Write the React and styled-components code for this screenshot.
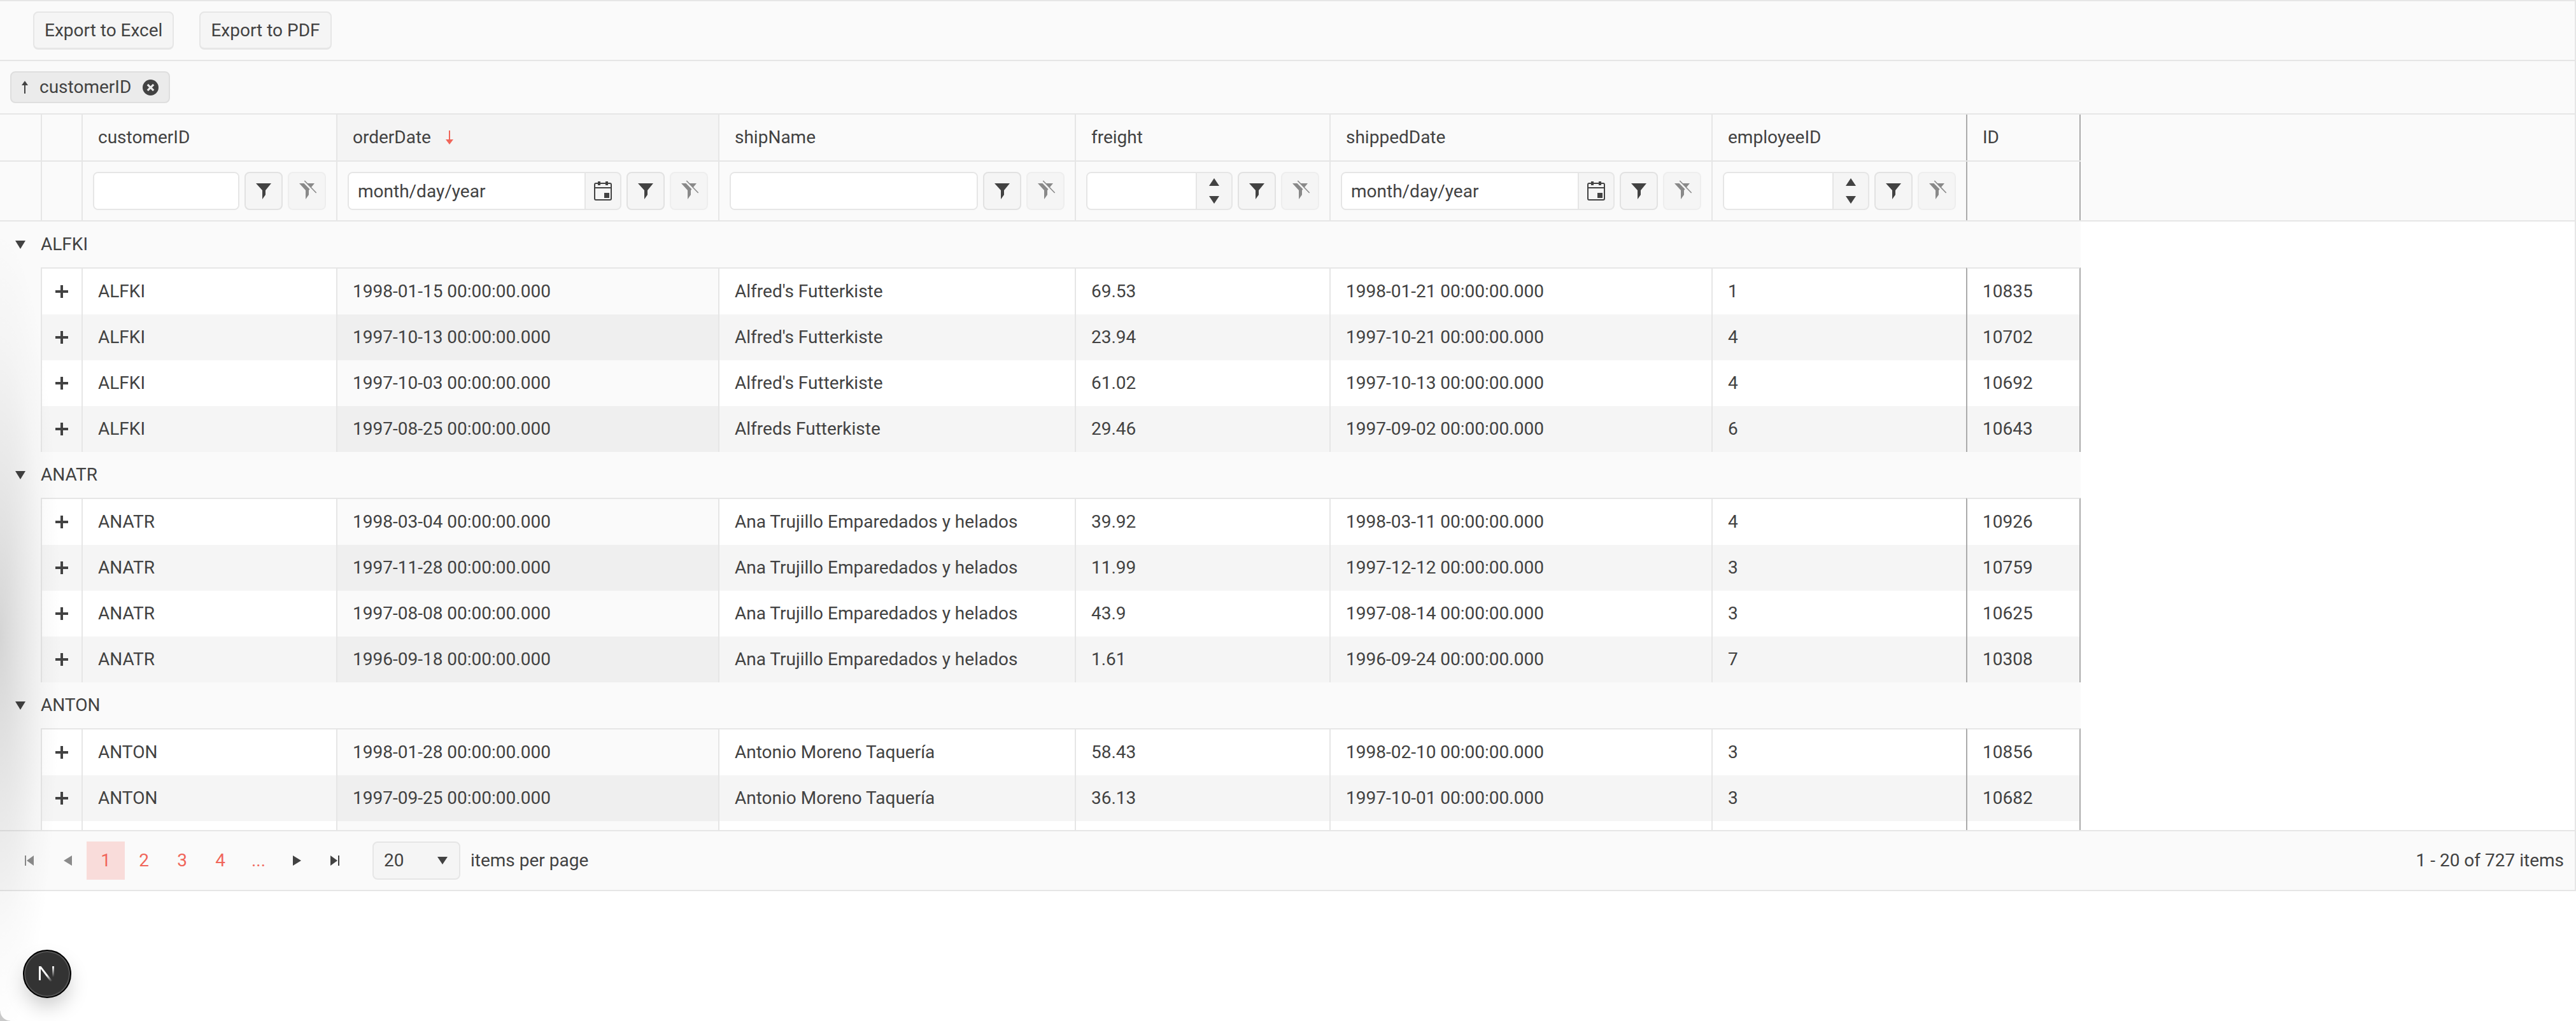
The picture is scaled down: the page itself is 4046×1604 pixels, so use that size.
import React from "react";
import styled, { createGlobalStyle } from "styled-components";

const GlobalStyle = createGlobalStyle`
  html, body { margin: 0; padding: 0; background: #fff; }
  * { box-sizing: border-box; }
`;

const COLS = "64px 64px 400px 600px 560px 400px 600px 400px 180px";
const LINE = "#e6e6e6";
const TEXT = "#424242";
const RED = "#f0665a";

const Page = styled.div`
  position: relative;
  width: 4046px;
  height: 1604px;
  overflow: hidden;
  background: #fff;
  font-family: Roboto, "Liberation Sans", sans-serif;
  font-size: 28px;
  line-height: 40px;
  color: ${TEXT};
`;

const Grid = styled.div`
  border-top: 2px solid ${LINE};
  border-bottom: 2px solid ${LINE};
  border-right: 2px solid ${LINE};
  height: 1400px;
  display: flex;
  flex-direction: column;
`;

const Toolbar = styled.div`
  height: 94px;
  flex: none;
  display: flex;
  gap: 40px;
  padding: 16px 52px;
  background: #fafafa;
  border-bottom: 2px solid ${LINE};
`;

const ToolButton = styled.button`
  height: 60px;
  padding: 0 16px;
  font: inherit;
  color: inherit;
  background: #f5f5f5;
  border: 2px solid ${LINE};
  border-bottom-width: 3px;
  border-radius: 8px;
`;

const GroupBar = styled.div`
  height: 84px;
  flex: none;
  padding: 16px;
  background: #fafafa;
  border-bottom: 2px solid ${LINE};
`;

const Chip = styled.div`
  width: 251px;
  height: 50px;
  display: flex;
  align-items: center;
  padding-left: 15px;
  background: #ebebeb;
  border: 2px solid #dedede;
  border-radius: 8px;
`;

const ChipLabel = styled.span`
  margin: 0 18px 0 17px;
`;

const Head = styled.div`
  flex: none;
  background: #fafafa;
  border-bottom: 2px solid ${LINE};
`;

const Row = styled.div`
  display: grid;
  grid-template-columns: ${COLS};
  width: 3268px;
`;

const HeadRow = styled(Row)`
  height: 74px;
  border-bottom: 2px solid ${LINE};
`;

const FilterRow = styled(Row)`
  height: 92px;
`;

const Cell = styled.div`
  display: flex;
  align-items: center;
  min-width: 0;
  white-space: nowrap;
  border-left: 2px solid ${(p) => (p.$locked ? "#ababab" : LINE)};
  border-right: ${(p) => (p.$last ? "2px solid #ababab" : "none")};
`;

const HeadCell = styled(Cell)`
  padding: 0 24px;
  background: ${(p) => (p.$sorted ? "#f4f4f4" : "transparent")};
`;

const BlankCell = styled.div``;

const FilterCell = styled(Cell)`
  padding: 0 16px;
  gap: 8px;
`;

const FieldBox = styled.div`
  flex: 1;
  min-width: 0;
  height: 60px;
  display: flex;
  background: #f5f5f5;
  border: 2px solid ${LINE};
  border-radius: 8px;
  overflow: hidden;
`;

const Field = styled.input`
  flex: 1;
  min-width: 0;
  height: 100%;
  padding: 0 14px;
  border: 0;
  outline: 0;
  font: inherit;
  color: inherit;
  background: #fff;
`;

const PickerSide = styled.div`
  flex: none;
  width: ${(p) => p.$w}px;
  display: flex;
  flex-direction: column;
  align-items: center;
  justify-content: ${(p) => (p.$spin ? "space-between" : "center")};
  padding: ${(p) => (p.$spin ? "8px 0" : "0")};
  border-left: 2px solid ${LINE};
`;

const FilterButton = styled.button`
  flex: none;
  width: 60px;
  height: 60px;
  padding: 0;
  display: flex;
  align-items: center;
  justify-content: center;
  background: #f5f5f5;
  border: 2px solid ${(p) => (p.$muted ? "#eeeeee" : "#e2e2e2")};
  border-radius: 8px;
`;

const Body = styled.div`
  flex: 1;
  min-height: 0;
  overflow: hidden;
`;

const GroupRow = styled.div`
  width: 3268px;
  height: 72px;
  display: flex;
  align-items: center;
  gap: 24px;
  padding-left: 24px;
  background: #fafafa;
`;

const DataRow = styled(Row)`
  height: ${(p) => (p.$first ? 74 : 72)}px;
  background: ${(p) => (p.$even ? "#f5f5f5" : "#fff")};
`;

const IndentCell = styled.div`
  background: #fafafa;
`;

const DataCell = styled(Cell)`
  padding: 0 24px;
  border-top: ${(p) => (p.$first ? `2px solid ${LINE}` : "none")};
  background: ${(p) => (p.$sorted ? (p.$even ? "#efefef" : "#fafafa") : "transparent")};
`;

const ExpandCell = styled(DataCell)`
  padding: 0;
  justify-content: center;
`;

const Pager = styled.div`
  flex: none;
  height: 94px;
  display: flex;
  align-items: center;
  padding: 0 17px 0 16px;
  background: #fafafa;
  border-top: 2px solid ${LINE};
`;

const PageButton = styled.div`
  width: 60px;
  height: 60px;
  display: flex;
  align-items: center;
  justify-content: center;
  color: ${RED};
  background: ${(p) => (p.$active ? "#f9dcda" : "transparent")};
  opacity: ${(p) => (p.$disabled ? 0.6 : 1)};
`;

const SizeSelect = styled.div`
  width: 138px;
  height: 60px;
  margin: 0 16px 0 29px;
  padding: 0 18px 0 16px;
  display: flex;
  align-items: center;
  justify-content: space-between;
  background: #f5f5f5;
  border: 2px solid ${LINE};
  border-radius: 8px;
`;

const PagerInfo = styled.div`
  margin-left: auto;
`;

const EdgeShade = styled.div`
  position: absolute;
  inset: 0;
  pointer-events: none;
  background: radial-gradient(
    ellipse 96px 640px at 0 1000px,
    rgba(0, 0, 0, 0.15) 0,
    rgba(0, 0, 0, 0.08) 38%,
    rgba(0, 0, 0, 0.025) 72%,
    transparent 100%
  );
`;

const CornerNotch = styled.div`
  position: absolute;
  left: 0;
  bottom: 0;
  width: 16px;
  height: 16px;
  background: radial-gradient(circle 16px at 100% 0, transparent 15px, #c9c9c9 16px);
`;

const DevBadge = styled.div`
  position: absolute;
  left: 36px;
  top: 1492px;
  width: 76px;
  height: 76px;
  padding-top: 4px;
  display: flex;
  align-items: center;
  justify-content: center;
  background: #333;
  border: 2px solid #000;
  border-radius: 50%;
  box-shadow: inset 0 0 0 2px rgba(255, 255, 255, 0.16), 0 16px 32px -4px rgba(0, 0, 0, 0.22);
`;

const MutedSvg = styled.svg`
  overflow: visible;
  opacity: 0.6;
`;

const SortSvg = styled.svg`
  margin-left: 22px;
`;

const Tri = ({ dir = "down", w = 16, h = 12, color = TEXT }) => {
  const pts = {
    down: `0,0 ${w},0 ${w / 2},${h}`,
    up: `0,${h} ${w},${h} ${w / 2},0`,
    left: `${w},0 ${w},${h} 0,${h / 2}`,
    right: `0,0 ${w},${h / 2} 0,${h}`,
  };
  return (
    <svg width={w} height={h} viewBox={`0 0 ${w} ${h}`}>
      <polygon points={pts[dir]} fill={color} />
    </svg>
  );
};

const FUNNEL = "M0 0H24L15 11V18L10 25V11Z";

const FilterIcon = () => (
  <svg width="24" height="25" viewBox="0 0 24 25">
    <path d={FUNNEL} fill={TEXT} />
  </svg>
);

const FilterClearIcon = () => (
  <MutedSvg width="24" height="25" viewBox="0 0 24 25">
    <path d={FUNNEL} fill={TEXT} />
    <path d="M6 -4L26 16.500" stroke="#f5f5f5" strokeWidth="3.400" />
    <path d="M8.300 -4L26.700 15" stroke={TEXT} strokeWidth="1.600" />
  </MutedSvg>
);

const CalendarIcon = () => (
  <svg width="28" height="30" viewBox="0 0 28 30">
    <rect x="1" y="3" width="26" height="26" rx="2" fill="none" stroke={TEXT} strokeWidth="2" />
    <path d="M1 10H27" stroke={TEXT} strokeWidth="2" />
    <rect x="6" y="0" width="4" height="6" fill={TEXT} />
    <rect x="18" y="0" width="4" height="6" fill={TEXT} />
    <rect x="16" y="18" width="8" height="8" fill={TEXT} />
  </svg>
);

const PlusIcon = () => (
  <svg width="20" height="20" viewBox="0 0 20 20">
    <path d="M0 10H20M10 0V20" stroke={TEXT} strokeWidth="4" />
  </svg>
);

const ArrowUp = () => (
  <svg width="12" height="20" viewBox="0 0 12 20">
    <path d="M6 20V3" stroke={TEXT} strokeWidth="2" />
    <polygon points="6,0 11,7 1,7" fill={TEXT} />
  </svg>
);

const SortDown = () => (
  <SortSvg width="14" height="22" viewBox="0 0 14 22">
    <path d="M7 0V16" stroke={RED} strokeWidth="2" />
    <polygon points="7,22 1,14 13,14" fill={RED} />
  </SortSvg>
);

const ChipClose = () => (
  <svg width="25" height="25" viewBox="0 0 24 24">
    <circle cx="12" cy="12" r="12" fill={TEXT} />
    <path d="M7.500 7.500L16.500 16.500M16.500 7.500L7.500 16.500" stroke="#ebebeb" strokeWidth="3" />
  </svg>
);

const EdgeNav = ({ dir }) => (
  <svg width="14" height="16" viewBox="0 0 14 16">
    {dir === "left" ? (
      <>
        <rect x="0" y="0" width="2" height="16" fill={TEXT} />
        <polygon points="14,0 14,16 3,8" fill={TEXT} />
      </>
    ) : (
      <>
        <rect x="12" y="0" width="2" height="16" fill={TEXT} />
        <polygon points="0,0 0,16 11,8" fill={TEXT} />
      </>
    )}
  </svg>
);

const NextMark = () => (
  <svg width="26" height="28" viewBox="0 0 26 28">
    <defs>
      <linearGradient id="nFade" x1="0" y1="0" x2="0.5" y2="1">
        <stop offset="0.6" stopColor="#fff" />
        <stop offset="1" stopColor="#fff" stopOpacity="0" />
      </linearGradient>
      <linearGradient id="nStem" x1="0" y1="0" x2="0" y2="1">
        <stop offset="0" stopColor="#fff" />
        <stop offset="0.85" stopColor="#fff" stopOpacity="0" />
      </linearGradient>
    </defs>
    <rect x="0" y="0" width="3" height="22" fill="#fff" />
    <polygon points="0,0 3.500,0 25,28 21,28" fill="url(#nFade)" />
    <rect x="21" y="0" width="3" height="20" fill="url(#nStem)" />
  </svg>
);

const Filter = ({ kind }) => (
  <>
    <FieldBox>
      <Field readOnly defaultValue={kind === "date" ? "month/day/year" : ""} />
      {kind === "date" && (
        <PickerSide $w={56}>
          <CalendarIcon />
        </PickerSide>
      )}
      {kind === "number" && (
        <PickerSide $w={56} $spin>
          <Tri dir="up" />
          <Tri dir="down" />
        </PickerSide>
      )}
    </FieldBox>
    <FilterButton>
      <FilterIcon />
    </FilterButton>
    <FilterButton $muted>
      <FilterClearIcon />
    </FilterButton>
  </>
);

const groups = [
  {
    name: "ALFKI",
    rows: [
      ["1998-01-15", "Alfred's Futterkiste", "69.53", "1998-01-21", "1", "10835"],
      ["1997-10-13", "Alfred's Futterkiste", "23.94", "1997-10-21", "4", "10702"],
      ["1997-10-03", "Alfred's Futterkiste", "61.02", "1997-10-13", "4", "10692"],
      ["1997-08-25", "Alfreds Futterkiste", "29.46", "1997-09-02", "6", "10643"],
    ],
  },
  {
    name: "ANATR",
    rows: [
      ["1998-03-04", "Ana Trujillo Emparedados y helados", "39.92", "1998-03-11", "4", "10926"],
      ["1997-11-28", "Ana Trujillo Emparedados y helados", "11.99", "1997-12-12", "3", "10759"],
      ["1997-08-08", "Ana Trujillo Emparedados y helados", "43.9", "1997-08-14", "3", "10625"],
      ["1996-09-18", "Ana Trujillo Emparedados y helados", "1.61", "1996-09-24", "7", "10308"],
    ],
  },
  {
    name: "ANTON",
    rows: [
      ["1998-01-28", "Antonio Moreno Taquería", "58.43", "1998-02-10", "3", "10856"],
      ["1997-09-25", "Antonio Moreno Taquería", "36.13", "1997-10-01", "3", "10682"],
    ],
  },
];

const stamp = (d) => `${d} 00:00:00.000`;

export default function App() {
  return (
    <Page>
      <GlobalStyle />
      <Grid>
        <Toolbar>
          <ToolButton>Export to Excel</ToolButton>
          <ToolButton>Export to PDF</ToolButton>
        </Toolbar>
        <GroupBar>
          <Chip>
            <ArrowUp />
            <ChipLabel>customerID</ChipLabel>
            <ChipClose />
          </Chip>
        </GroupBar>
        <Head>
          <HeadRow>
            <BlankCell />
            <Cell />
            <HeadCell>customerID</HeadCell>
            <HeadCell $sorted>
              orderDate
              <SortDown />
            </HeadCell>
            <HeadCell>shipName</HeadCell>
            <HeadCell>freight</HeadCell>
            <HeadCell>shippedDate</HeadCell>
            <HeadCell>employeeID</HeadCell>
            <HeadCell $locked $last>ID</HeadCell>
          </HeadRow>
          <FilterRow>
            <BlankCell />
            <Cell />
            <FilterCell><Filter kind="text" /></FilterCell>
            <FilterCell><Filter kind="date" /></FilterCell>
            <FilterCell><Filter kind="text" /></FilterCell>
            <FilterCell><Filter kind="number" /></FilterCell>
            <FilterCell><Filter kind="date" /></FilterCell>
            <FilterCell><Filter kind="number" /></FilterCell>
            <Cell $locked $last />
          </FilterRow>
        </Head>
        <Body>
          {groups.map((g) => (
            <React.Fragment key={g.name}>
              <GroupRow>
                <Tri w={16} h={13} />
                {g.name}
              </GroupRow>
              {g.rows.map((r, i) => {
                const first = i === 0;
                const even = i % 2 === 1;
                return (
                  <DataRow key={r[5]} $first={first} $even={even}>
                    <IndentCell />
                    <ExpandCell $first={first}><PlusIcon /></ExpandCell>
                    <DataCell $first={first}>{g.name}</DataCell>
                    <DataCell $first={first} $even={even} $sorted>{stamp(r[0])}</DataCell>
                    <DataCell $first={first}>{r[1]}</DataCell>
                    <DataCell $first={first}>{r[2]}</DataCell>
                    <DataCell $first={first}>{stamp(r[3])}</DataCell>
                    <DataCell $first={first}>{r[4]}</DataCell>
                    <DataCell $first={first} $locked $last>{r[5]}</DataCell>
                  </DataRow>
                );
              })}
            </React.Fragment>
          ))}
          <DataRow>
            <IndentCell />
            <Cell />
            <Cell />
            <DataCell $sorted />
            <Cell />
            <Cell />
            <Cell />
            <Cell />
            <Cell $locked $last />
          </DataRow>
        </Body>
        <Pager>
          <PageButton $disabled><EdgeNav dir="left" /></PageButton>
          <PageButton $disabled><Tri dir="left" w={13} h={16} /></PageButton>
          <PageButton $active>1</PageButton>
          <PageButton>2</PageButton>
          <PageButton>3</PageButton>
          <PageButton>4</PageButton>
          <PageButton>...</PageButton>
          <PageButton><Tri dir="right" w={13} h={16} /></PageButton>
          <PageButton><EdgeNav dir="right" /></PageButton>
          <SizeSelect>
            20
            <Tri w={16} h={12} />
          </SizeSelect>
          items per page
          <PagerInfo>1 - 20 of 727 items</PagerInfo>
        </Pager>
      </Grid>
      <EdgeShade />
      <CornerNotch />
      <DevBadge>
        <NextMark />
      </DevBadge>
    </Page>
  );
}
